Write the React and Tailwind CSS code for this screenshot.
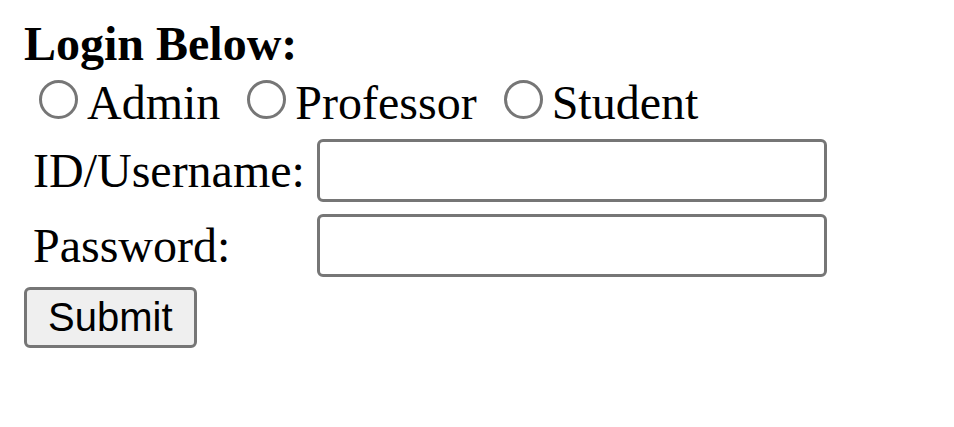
export default function App() {
  const roles = ["Admin", "Professor", "Student"];

  return (
    <div className="min-h-screen bg-white px-[24px] pt-[16px] font-['Liberation_Serif','Times_New_Roman',serif] text-[48px] leading-[normal] text-black">
      <div className="font-bold">Login Below:</div>

      <div className="whitespace-nowrap">
        {roles.map((role) => (
          <label key={role} className="mr-[12px]">
            <input
              type="radio"
              name="role"
              value={role}
              className="ml-[15px] mr-[9px] mt-[9px] inline-block h-[39px] w-[39px] appearance-none rounded-full border-[3px] border-[#767676] bg-white align-baseline"
            />
            {role}
          </label>
        ))}
      </div>

      <table className="border-separate border-spacing-[6px]">
        <tbody>
          <tr>
            <td className="p-[3px] align-middle">ID/Username:</td>
            <td className="p-[3px] align-middle">
              <input
                type="text"
                className="block h-[63px] w-[510px] rounded-[6px] border-[3px] border-[#767676] bg-white px-[6px] font-['Liberation_Sans',Arial,sans-serif] text-[40px] outline-none"
              />
            </td>
          </tr>
          <tr>
            <td className="p-[3px] align-middle">Password:</td>
            <td className="p-[3px] align-middle">
              <input
                type="password"
                className="block h-[63px] w-[510px] rounded-[6px] border-[3px] border-[#767676] bg-white px-[6px] font-['Liberation_Sans',Arial,sans-serif] text-[40px] outline-none"
              />
            </td>
          </tr>
        </tbody>
      </table>

      <button
        type="submit"
        className="mt-[1px] block rounded-[6px] border-[3px] border-[#767676] bg-[#efefef] px-[21px] py-[5px] font-['Liberation_Sans',Arial,sans-serif] text-[40px] leading-[normal] text-black"
      >
        Submit
      </button>
    </div>
  );
}
